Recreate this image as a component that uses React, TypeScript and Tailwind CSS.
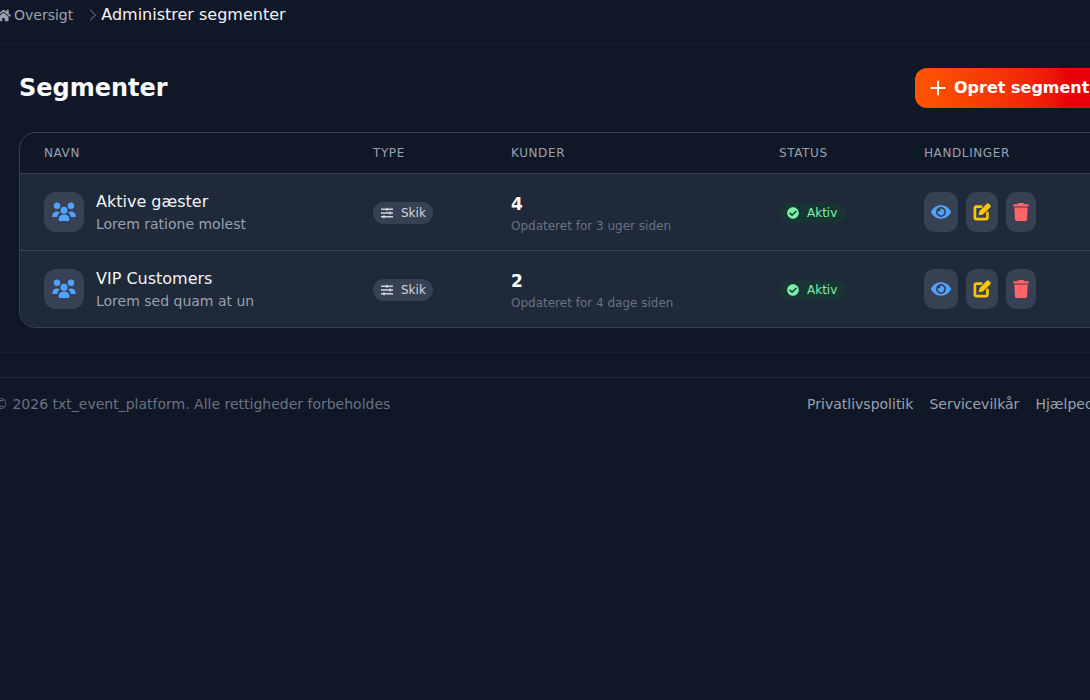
import React from "react";
import { FaCheckCircle, FaEye, FaHome, FaSlidersH } from "react-icons/fa";
import { FaTrash } from "react-icons/fa6";
import { ChevronRight, Plus } from "lucide-react";

const segments = [
  { name: "Aktive gæster", desc: "Lorem ratione molest", count: "4", updated: "Opdateret for 3 uger siden" },
  { name: "VIP Customers", desc: "Lorem sed quam at un", count: "2", updated: "Opdateret for 4 dage siden" },
];

const gridCols = "grid grid-cols-[329px_138px_268px_145px_1fr]";

const GroupIcon: React.FC = () => (
  <svg viewBox="0 0 24 20" className="h-[20px] w-[24px] text-blue-400" fill="currentColor">
    <circle cx="5" cy="3.8" r="3.2" />
    <circle cx="19" cy="3.8" r="3.2" />
    <path d="M0.3 14.5C0.3 11.5 2.4 9.6 5 9.6c1.2 0 2.2.4 3 1-1.5 1-2.6 2.6-2.8 4.4H1C.6 15 .3 14.8.3 14.5z" />
    <path d="M23.7 14.5c0-3-2.1-4.9-4.7-4.9-1.2 0-2.2.4-3 1 1.5 1 2.6 2.6 2.8 4.4H23c.4 0 .7-.2.7-.5z" />
    <circle cx="12" cy="8.2" r="3.5" />
    <path d="M6.6 17.5c0-3 2.4-4.9 5.4-4.9s5.4 1.9 5.4 4.9c0 1-.7 1.6-1.6 1.6H8.2c-.9 0-1.6-.6-1.6-1.6z" />
  </svg>
);

const EditIcon: React.FC = () => (
  <svg viewBox="0 0 24 24" className="h-[20px] w-[20px] text-yellow-400" fill="none">
    <path d="M11 5.5H5.5A2 2 0 0 0 3.5 7.5v11a2 2 0 0 0 2 2h11a2 2 0 0 0 2-2V13" stroke="currentColor" strokeWidth="3.2" strokeLinecap="round" />
    <path d="M8 16l1-5.2L17.8 2a1.7 1.7 0 0 1 2.4 0l1.8 1.8a1.7 1.7 0 0 1 0 2.4L13.2 15z" fill="currentColor" />
  </svg>
);

const App: React.FC = () => {
  return (
    <div className="h-[700px] w-[1090px] overflow-hidden bg-gray-900 font-['DejaVu_Sans',sans-serif]">
      <div className="w-[1140px]">
        <nav className="flex h-[44px] items-start border-b border-gray-800/50 pt-[5px]">
          <FaHome className="-ml-[4px] mt-[3px] h-[15px] w-[15px] text-gray-400" />
          <span className="ml-[3px] text-[14px] leading-[20px] text-gray-400">Oversigt</span>
          <ChevronRight className="ml-[10px] h-[20px] w-[20px] text-gray-500" strokeWidth={1.25} />
          <span className="-ml-[2px] text-[16px] leading-[20px] text-gray-100">Administrer segmenter</span>
        </nav>

        <main className="border-b border-gray-800/50 pb-[24px] pl-[19px] pr-[20px] pt-[24px]">
          <div className="flex h-[40px] items-center justify-between">
            <h1 className="text-[24px] font-bold leading-[40px] text-gray-50">Segmenter</h1>
            <button className="flex h-[40px] w-[205px] items-center gap-[5px] rounded-[12px] bg-gradient-to-r from-[#ff5500] to-red-600 to-[85%] pl-[12px] text-[16px] font-bold text-white">
              <Plus className="h-[22px] w-[22px]" strokeWidth={2.25} />
              Opret segment
            </button>
          </div>

          <div className="mt-[24px] overflow-hidden rounded-[16px] border border-gray-700 bg-gray-900">
            <div className={`${gridCols} h-[40px] items-center text-[12px] tracking-[0.6px] text-gray-400`}>
              <div className="pl-[24px]">NAVN</div>
              <div className="pl-[24px]">TYPE</div>
              <div className="pl-[24px]">KUNDER</div>
              <div className="pl-[24px]">STATUS</div>
              <div className="pl-[24px]">HANDLINGER</div>
            </div>
            {segments.map((s) => (
              <div key={s.name} className={`${gridCols} h-[77px] items-center border-t border-gray-700 bg-gray-800`}>
                <div className="flex items-center gap-[12px] pl-[24px]">
                  <div className="flex h-[40px] w-[40px] items-center justify-center rounded-[12px] bg-gray-700">
                    <GroupIcon />
                  </div>
                  <div className="pt-[1px]">
                    <div className="text-[16px] leading-[22px] text-gray-100">{s.name}</div>
                    <div className="text-[14px] leading-[22px] text-gray-400">{s.desc}</div>
                  </div>
                </div>
                <div className="pl-[24px] pt-[3px]">
                  <span className="inline-flex h-[22px] items-center gap-[8px] rounded-full bg-gray-700 pl-[8px] pr-[7px] text-[12px] text-gray-300">
                    <FaSlidersH className="h-[12px] w-[12px]" />
                    Skik
                  </span>
                </div>
                <div className="pl-[24px] pt-[3px]">
                  <div className="text-[17px] font-bold leading-[22px] text-white">{s.count}</div>
                  <div className="mt-[2px] text-[12px] leading-[18px] text-gray-500">{s.updated}</div>
                </div>
                <div className="pl-[24px] pt-[3px]">
                  <span className="inline-flex h-[20px] items-center gap-[8px] rounded-full bg-green-900/30 pl-[8px] pr-[9px] text-[12px] text-green-300">
                    <FaCheckCircle className="h-[12px] w-[12px]" />
                    Aktiv
                  </span>
                </div>
                <div className="flex items-center gap-[8px] pl-[24px]">
                  <button className="flex h-[40px] w-[34px] items-center justify-center rounded-[10px] bg-gray-700">
                    <FaEye className="h-[20px] w-[20px] text-blue-400" />
                  </button>
                  <button className="flex h-[40px] w-[32px] items-center justify-center rounded-[10px] bg-gray-700">
                    <EditIcon />
                  </button>
                  <button className="flex h-[40px] w-[30px] items-center justify-center rounded-[10px] bg-gray-700">
                    <FaTrash className="h-[18px] w-[18px] text-red-400" />
                  </button>
                </div>
              </div>
            ))}
          </div>
        </main>

        <footer className="mt-[24px] flex h-[54px] items-center justify-between border-t border-gray-800 pr-[10px] text-[14px]">
          <span className="-ml-[6px] text-gray-500">© 2026 txt_event_platform. Alle rettigheder forbeholdes</span>
          <div className="flex gap-[16px] text-gray-400">
            <a>Privatlivspolitik</a>
            <a>Servicevilkår</a>
            <a>Hjælpecenter</a>
          </div>
        </footer>
      </div>
    </div>
  );
};

export default App;
